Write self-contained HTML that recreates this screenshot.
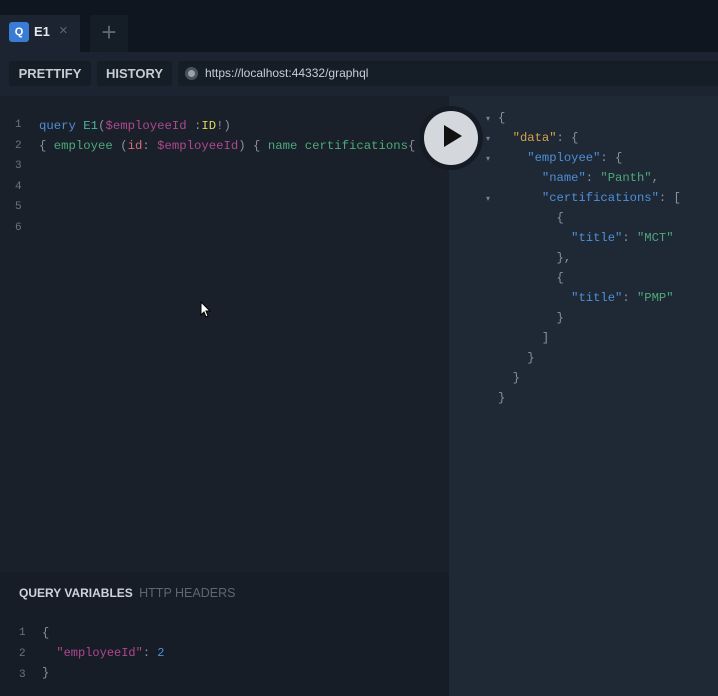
<!DOCTYPE html>
<html><head><meta charset="utf-8"><style>
*{margin:0;padding:0;box-sizing:border-box}
body{width:718px;height:696px;background:#0f161f;font-family:"Liberation Sans",sans-serif;position:relative;overflow:hidden}
.abs{position:absolute}
.mono{font-family:"Liberation Mono",monospace;font-size:12px;white-space:pre}
.ln{color:#6b7480;font-size:11px}
</style></head><body>
<div class="abs" style="left:0;top:0;width:718px;height:52px;background:#0f161f"></div>
<div class="abs" style="left:0;top:15px;width:80px;height:37px;background:#1b2430"></div>
<div class="abs" style="left:9px;top:22px;width:20px;height:20px;background:#3a7bd5;border-radius:3px;color:#fff;font-weight:bold;font-size:11px;text-align:center;line-height:20px">Q</div>
<div class="abs" style="left:34px;top:24px;color:#e4e8ee;font-weight:bold;font-size:13px">E1</div>
<div class="abs" style="left:59px;top:22px;color:#5d6673;font-size:15px">×</div>
<div class="abs" style="left:90px;top:15px;width:38px;height:37px;background:#151d27;color:#5d6673;font-size:26px;text-align:center;line-height:34px">+</div>
<div class="abs" style="left:0;top:52px;width:718px;height:44px;background:#1b2430"></div>
<div class="abs" style="left:9px;top:61px;width:82px;height:25px;background:#151d27;border-radius:3px;color:#c8cdd4;font-weight:bold;font-size:13px;text-align:center;line-height:25px">PRETTIFY</div>
<div class="abs" style="left:97px;top:61px;width:75px;height:25px;background:#151d27;border-radius:3px;color:#c8cdd4;font-weight:bold;font-size:13px;text-align:center;line-height:25px">HISTORY</div>
<div class="abs" style="left:178px;top:61px;width:540px;height:25px;background:#151d27;border-radius:3px 0 0 3px"></div>
<div class="abs" style="left:185px;top:67px;width:13px;height:13px;border-radius:50%;background:#4a525d"></div>
<div class="abs" style="left:188px;top:70px;width:7px;height:7px;border-radius:50%;background:#9aa1aa"></div>
<div class="abs" style="left:205px;top:66px;color:#c8cdd4;font-size:12px">https://localhost:44332/graphql</div>
<div class="abs" style="left:0;top:96px;width:449px;height:476px;background:#19202a"></div>
<div class="abs" style="left:449px;top:96px;width:269px;height:600px;background:#1f2936"></div>
<div class="abs" style="left:0;top:572px;width:449px;height:124px;background:#161d27"></div>
<div class="abs mono" style="left:15px;top:115px;line-height:19.6px"><span class="ln">1</span>
<span class="ln">2</span>
<span class="ln">3</span>
<span class="ln">4</span>
<span class="ln">5</span>
<span class="ln">6</span></div>
<div class="abs mono" style="left:39px;top:117px;line-height:19.6px;color:#8a919b;font-size:12.3px"><span style="color:#4f8fd6">query</span> <span style="color:#4fb3a0">E1</span>(<span style="color:#b0478f">$employeeId</span> :<span style="color:#e6d65a">ID</span>!)
{ <span style="color:#4fa87a">employee</span> (<span style="color:#d96b7a">id</span>: <span style="color:#b0478f">$employeeId</span>) { <span style="color:#4fa87a">name certifications</span>{</div>
<div class="abs" style="left:419px;top:106px;width:64px;height:64px;border-radius:50%;background:#141b24"></div>
<div class="abs" style="left:424px;top:111px;width:54px;height:54px;border-radius:50%;background:#d4d7dc"></div>
<svg class="abs" style="left:443px;top:124px" width="20" height="24"><path d="M1 1 L19 12 L1 23Z" fill="#111"/></svg>
<div class="abs" style="left:486px;top:109px;color:#7a828d;font-size:8px;line-height:20px;white-space:pre">▾
▾
▾

▾</div>
<div class="abs mono" style="left:498px;top:108px;line-height:20px;color:#8a919b;font-size:12.2px">{
  <span style="color:#d6a24a">"data"</span>: {
    <span style="color:#4f8fd6">"employee"</span>: {
      <span style="color:#4f8fd6">"name"</span>: <span style="color:#4fa87a">"Panth"</span>,
      <span style="color:#4f8fd6">"certifications"</span>: [
        {
          <span style="color:#4f8fd6">"title"</span>: <span style="color:#4fa87a">"MCT"</span>
        },
        {
          <span style="color:#4f8fd6">"title"</span>: <span style="color:#4fa87a">"PMP"</span>
        }
      ]
    }
  }
}</div>
<div class="abs" style="left:19px;top:586px;color:#d0d4da;font-weight:bold;font-size:12px">QUERY VARIABLES <span style="color:#5d6673;font-weight:normal;font-size:12.5px;margin-left:3px">HTTP HEADERS</span></div>
<div class="abs mono" style="left:19px;top:622px;line-height:20px"><span class="ln">1</span>
<span class="ln">2</span>
<span class="ln">3</span></div>
<div class="abs mono" style="left:42px;top:623px;line-height:20px;color:#8a919b">{
  <span style="color:#b0478f">"employeeId"</span>: <span style="color:#4f8fd6">2</span>
}</div>
<svg class="abs" style="left:200px;top:301px" width="12" height="18"><path d="M1 1 L1 14 L4 11 L6 16 L8 15 L6 10 L10 10Z" fill="#fff" stroke="#000" stroke-width="1"/></svg>
</body></html>
